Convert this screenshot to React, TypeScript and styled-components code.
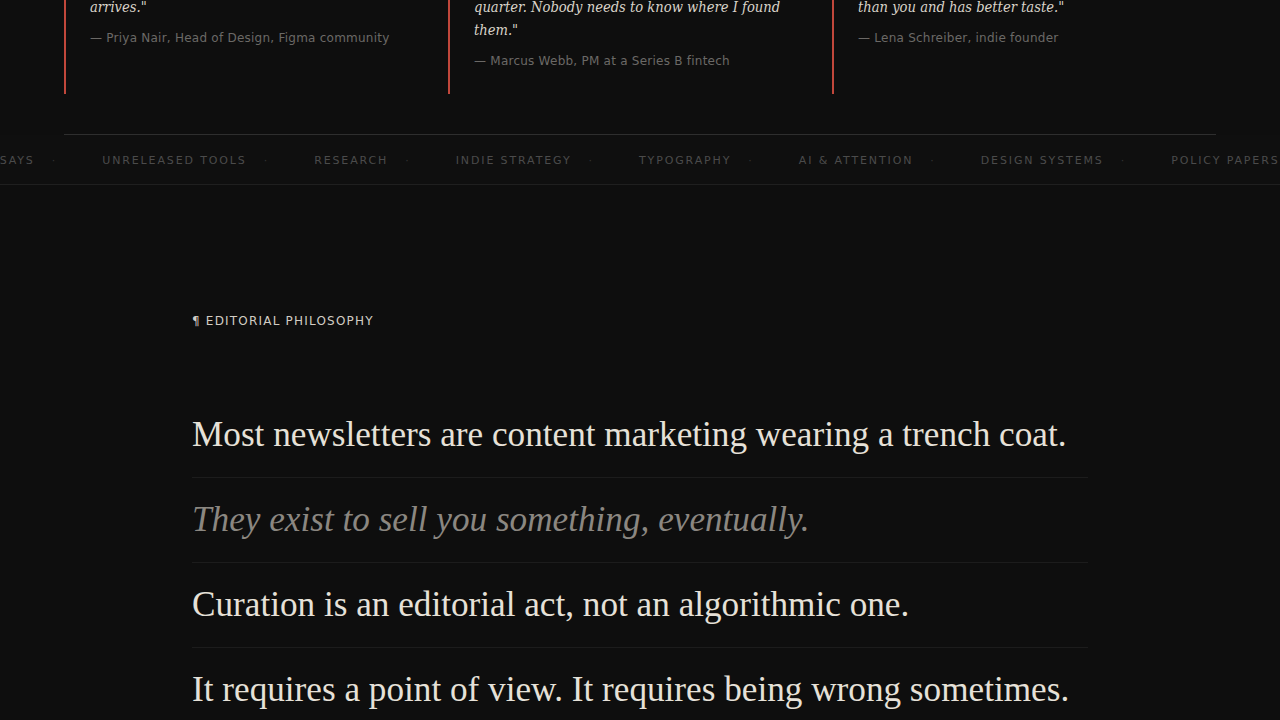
import React from 'react';
import styled, { createGlobalStyle } from 'styled-components';

const GlobalStyle = createGlobalStyle`
  html, body {
    margin: 0;
    padding: 0;
    background: #0e0e0e;
  }
  body {
    font-family: 'DejaVu Sans', sans-serif;
    color: #e6e1d8;
    overflow: hidden;
  }
`;

export const Page = styled.div`
  /* the page is shown scrolled down a little */
  margin-top: -79px;
`;

export const Testimonials = styled.section`
  max-width: 1152px;
  margin: 0 auto;
  display: grid;
  grid-template-columns: repeat(3, 1fr);
  padding-bottom: 40px;
  border-bottom: 1px solid #2e2e2e;
`;

export const Card = styled.figure`
  margin: 0;
  border-left: 2px solid #c1473b;
  padding: 28px 40px 23px 24px;
  display: flex;
  flex-direction: column;
  gap: 10px;
`;

export const Quote = styled.blockquote`
  margin: 0;
  font-family: 'DejaVu Serif Condensed', 'DejaVu Serif', serif;
  font-stretch: condensed;
  font-style: italic;
  font-size: 14.6px;
  line-height: 23px;
  color: #d9d3c9;
`;

export const Cite = styled.figcaption`
  font-family: 'DejaVu Sans', sans-serif;
  font-size: 12px;
  letter-spacing: 0.02em;
  line-height: 20px;
  color: #6b6966;
`;

export const TopicBar = styled.nav`
  height: 47px;
  padding-top: 2px;
  border-bottom: 1px solid #1f1f1f;
  background: #0f0f0f;
  overflow: hidden;
  display: flex;
  align-items: center;
`;

export const Track = styled.div`
  display: flex;
  align-items: center;
  gap: 47px;
  white-space: nowrap;
  transform: translateX(-18px);
`;

export const Topic = styled.span`
  display: flex;
  align-items: center;
  gap: 17px;
  font-size: 11px;
  letter-spacing: 0.17em;
  text-transform: uppercase;
  color: #4b4b4b;
`;

export const Dot = styled.span`
  color: #333;
  letter-spacing: 0;
`;

export const Philosophy = styled.section`
  max-width: 896px;
  margin: 0 auto;
  padding-top: 128px;
`;

export const Eyebrow = styled.p`
  margin: 0;
  font-size: 12px;
  line-height: 16px;
  letter-spacing: 0.1em;
  text-transform: uppercase;
  color: #d2cdc4;
`;

export const Statements = styled.ul`
  list-style: none;
  margin: 64px 0 0;
  padding: 0;
`;

export const Statement = styled.li<{ $muted?: boolean }>`
  padding: 21px 0;
  border-bottom: 1px solid #1c1c1c;
  font-family: 'Liberation Serif', 'Times New Roman', serif;
  font-size: 35.2px;
  line-height: 42px;
  font-style: ${(p) => (p.$muted ? 'italic' : 'normal')};
  color: ${(p) => (p.$muted ? '#8b8781' : '#e6e1d8')};
`;

const quotes = [
  {
    text: '"The one email I read slowly, start to finish. I block an hour on my calendar the day it arrives."',
    by: '— Priya Nair, Head of Design, Figma community',
  },
  {
    text: '"Half my team reads it because I told them to. My best roadmap ideas came from it this quarter. Nobody needs to know where I found them."',
    by: '— Marcus Webb, PM at a Series B fintech',
  },
  {
    text: '"Less like a newsletter, more like private correspondence from a friend who reads more than you and has better taste."',
    by: '— Lena Schreiber, indie founder',
  },
];

const topics = [
  'Essays',
  'Unreleased tools',
  'Research',
  'Indie strategy',
  'Typography',
  'AI & attention',
  'Design systems',
  'Policy papers',
  'Field notes',
];

const statements = [
  { text: 'Most newsletters are content marketing wearing a trench coat.' },
  { text: 'They exist to sell you something, eventually.', muted: true },
  { text: 'Curation is an editorial act, not an algorithmic one.' },
  { text: 'It requires a point of view. It requires being wrong sometimes.' },
  { text: 'We would rather send nothing than send filler.' },
];

export default function App() {
  return (
    <Page>
      <GlobalStyle />
      <Testimonials>
        {quotes.map((q) => (
          <Card key={q.by}>
            <Quote>{q.text}</Quote>
            <Cite>{q.by}</Cite>
          </Card>
        ))}
      </Testimonials>
      <TopicBar>
        <Track>
          {topics.map((t) => (
            <Topic key={t}>
              {t}
              <Dot>·</Dot>
            </Topic>
          ))}
        </Track>
      </TopicBar>
      <Philosophy>
        <Eyebrow>¶ Editorial philosophy</Eyebrow>
        <Statements>
          {statements.map((s) => (
            <Statement key={s.text} $muted={s.muted}>
              {s.text}
            </Statement>
          ))}
        </Statements>
      </Philosophy>
    </Page>
  );
}
